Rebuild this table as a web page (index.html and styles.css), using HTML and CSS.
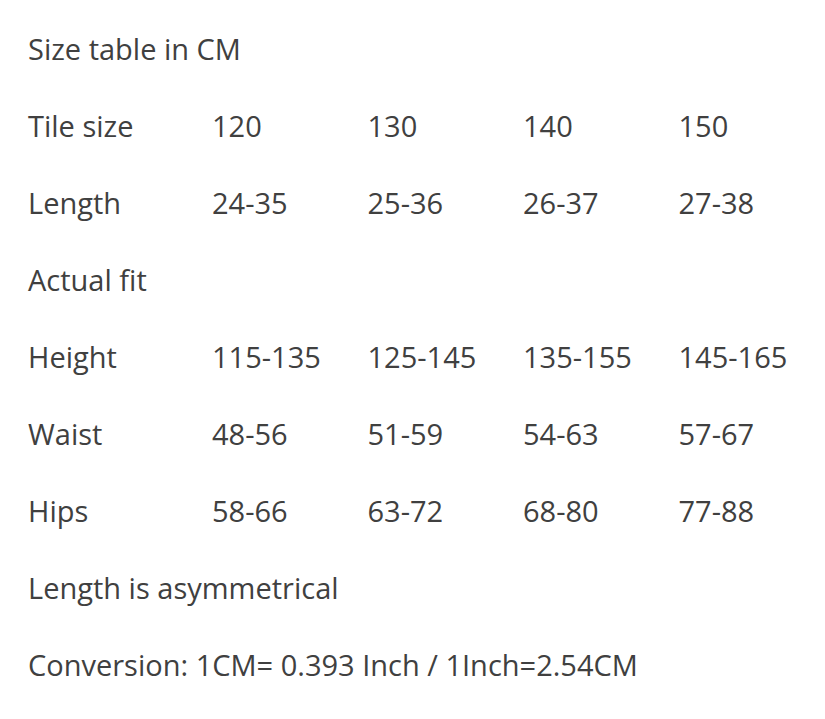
FILE: index.html
```html
<!DOCTYPE html>
<html>
<head>
  <title>Size table</title>
  <link rel="stylesheet" href="styles.css">
</head>
<body>
  <div class="size-chart">
    <p class="line">Size table in CM</p>
    <div class="row">
      <span>Tile size</span><span>120</span><span>130</span><span>140</span><span>150</span>
    </div>
    <div class="row">
      <span>Length</span><span>24-35</span><span>25-36</span><span>26-37</span><span>27-38</span>
    </div>
    <p class="line">Actual fit</p>
    <div class="row">
      <span>Height</span><span>115-135</span><span>125-145</span><span>135-155</span><span>145-165</span>
    </div>
    <div class="row">
      <span>Waist</span><span>48-56</span><span>51-59</span><span>54-63</span><span>57-67</span>
    </div>
    <div class="row">
      <span>Hips</span><span>58-66</span><span>63-72</span><span>68-80</span><span>77-88</span>
    </div>
    <p class="line">Length is asymmetrical</p>
    <p class="line">Conversion: 1CM= 0.393 Inch / 1Inch=2.54CM</p>
  </div>
</body>
</html>
```

FILE: styles.css
```css
body {
  margin: 0;
  padding: 0;
  background: #fff;
  font-family: "Open Sans", "Noto Sans", sans-serif;
  color: #404040;
  overflow: hidden;
}

.size-chart {
  padding: 10px 0 0 28px;
  font-size: 29px;
  line-height: 77px;
}

.line {
  margin: 0;
  white-space: nowrap;
}

.row {
  display: grid;
  grid-template-columns: 184px repeat(4, 155.5px);
  white-space: nowrap;
}
```
